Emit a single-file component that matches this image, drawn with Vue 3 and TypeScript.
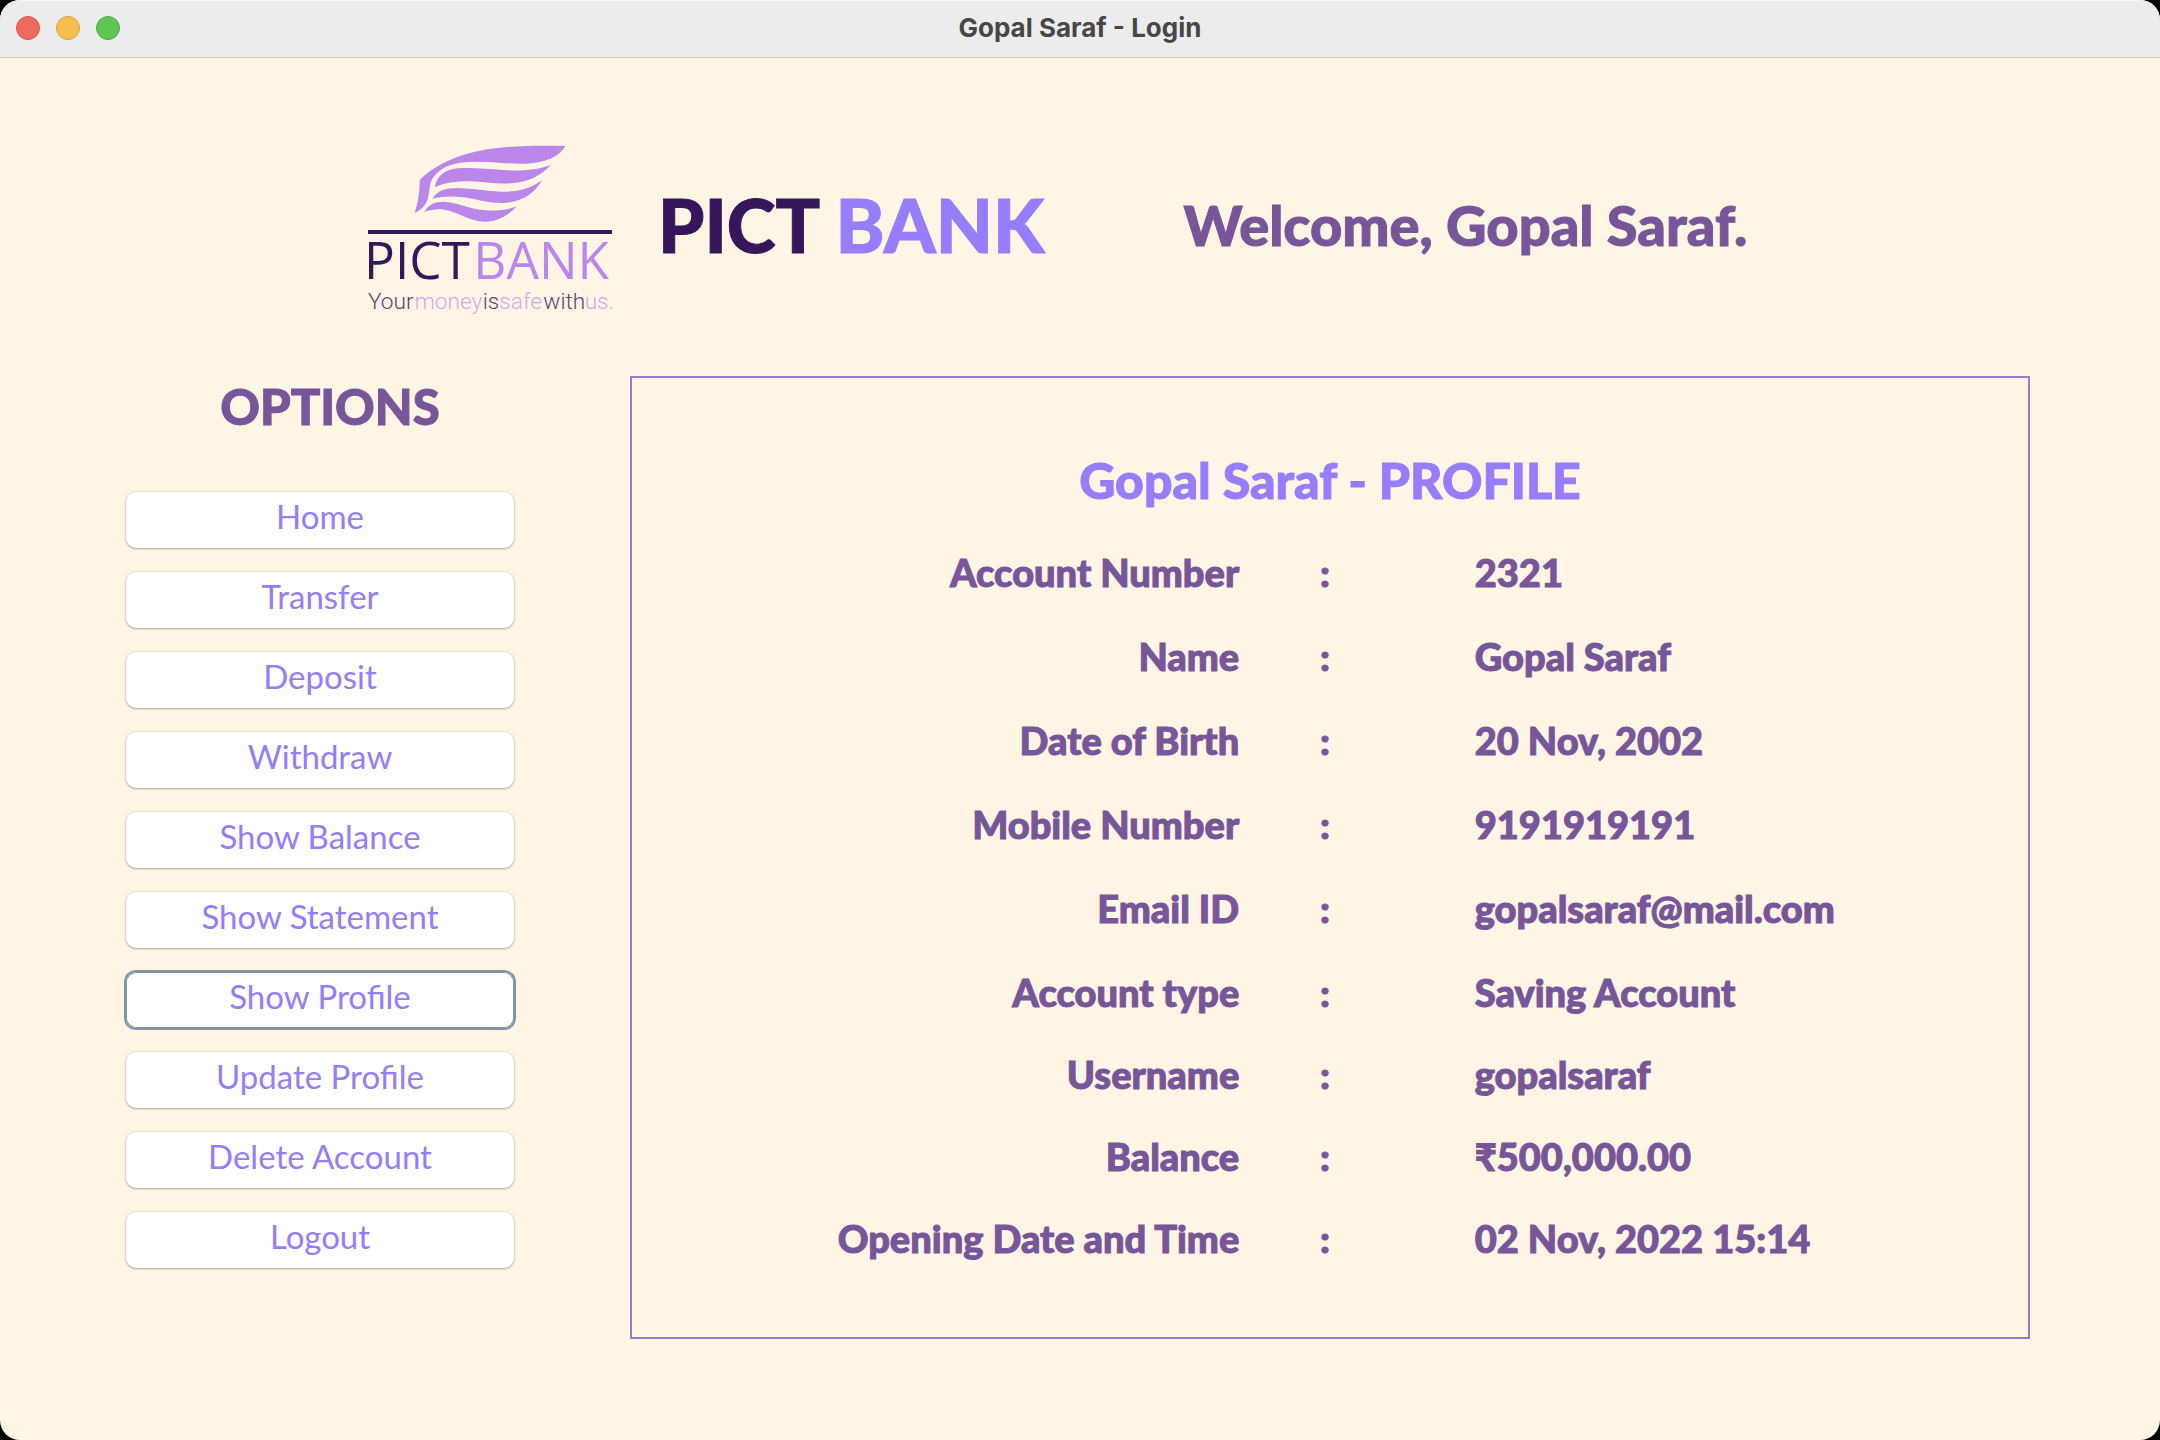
<script setup lang="ts">
import { ref } from 'vue'

interface ProfileRow {
  label: string
  value: string
}

const options: string[] = [
  'Home',
  'Transfer',
  'Deposit',
  'Withdraw',
  'Show Balance',
  'Show Statement',
  'Show Profile',
  'Update Profile',
  'Delete Account',
  'Logout',
]

const active = ref('Show Profile')

const profile: ProfileRow[] = [
  { label: 'Account Number', value: '2321' },
  { label: 'Name', value: 'Gopal Saraf' },
  { label: 'Date of Birth', value: '20 Nov, 2002' },
  { label: 'Mobile Number', value: '9191919191' },
  { label: 'Email ID', value: 'gopalsaraf@mail.com' },
  { label: 'Account type', value: 'Saving Account' },
  { label: 'Username', value: 'gopalsaraf' },
  { label: 'Balance', value: '₹500,000.00' },
  { label: 'Opening Date and Time', value: '02 Nov, 2022 15:14' },
]
</script>

<template>
  <div class="window">
    <div class="titlebar">
      <div class="lights">
        <button class="light close" type="button" aria-label="Close"></button>
        <button class="light minimise" type="button" aria-label="Minimise"></button>
        <button class="light zoom" type="button" aria-label="Zoom"></button>
      </div>
      <span class="window-title">Gopal Saraf - Login</span>
    </div>

    <header class="header">
      <svg class="logo" viewBox="39 39 765 516" role="img" aria-label="PICT Bank logo">
        <g fill="#ba86ea">
          <path d="M646 48C560 46 470 46 390 62C310 78 245 112 209 150C209 185 205 215 194 249C215 240 230 222 234 204C239 182 238 165 246 148C262 122 290 104 330 98C400 90 460 103 530 101C585 96 625 85 646 48Z" />
          <path d="M604 104C560 120 510 124 460 120C410 117 370 112 325 115C285 118 262 136 254 172C290 156 325 153 360 154C400 156 440 163 485 160C540 155 575 134 604 104Z" />
          <path d="M577 150C540 178 500 186 455 185C410 184 370 175 325 174C285 174 262 182 247 206C280 198 310 198 340 202C385 209 420 221 465 219C520 214 555 188 577 150Z" />
          <path d="M500 229C470 241 435 244 400 240C360 236 325 219 285 215C255 214 238 222 222 246C250 236 275 236 300 243C335 253 360 274 405 275C445 275 475 256 500 229Z" />
        </g>
        <rect x="54" y="300" width="732" height="12" fill="#35165a" />
        <g class="logo-name">
          <text x="42" y="448" fill="#35165a">PICT</text>
          <text x="370" y="448" fill="#ba86ea">BANK</text>
        </g>
        <g class="logo-tagline">
          <text x="54" y="537" fill="#5d4479">Your</text>
          <text x="194" y="537" fill="#d0aaec">money</text>
          <text x="398" y="537" fill="#5d4479">is</text>
          <text x="448" y="537" fill="#d0aaec">safe</text>
          <text x="580" y="537" fill="#5d4479">with</text>
          <text x="704" y="537" fill="#d0aaec">us.</text>
        </g>
      </svg>
      <h1 class="brand">PICT <span class="brand-accent">BANK</span></h1>
      <p class="welcome">Welcome, Gopal Saraf.</p>
    </header>

    <main class="content">
      <nav class="sidebar" aria-labelledby="options-title">
        <h2 id="options-title" class="options-title">OPTIONS</h2>
        <div class="options">
          <button
            v-for="option in options"
            :key="option"
            type="button"
            class="option"
            :class="{ active: option === active }"
            @click="active = option"
          >
            {{ option }}
          </button>
        </div>
      </nav>

      <section class="panel">
        <h2 class="panel-title">Gopal Saraf - PROFILE</h2>
        <table class="profile">
          <tbody>
            <tr v-for="row in profile" :key="row.label">
              <th scope="row">{{ row.label }}</th>
              <td class="colon">:</td>
              <td class="value">{{ row.value }}</td>
            </tr>
          </tbody>
        </table>
      </section>
    </main>
  </div>
</template>

<style>
body {
  margin: 0;
  background: #000;
}
</style>

<style scoped>
.window {
  box-sizing: border-box;
  min-height: 100vh;
  overflow: hidden;
  border-radius: 20px;
  background: #fff5e4;
  color: #775599;
  font-family: Lato, 'Noto Sans', sans-serif;
}

.titlebar {
  box-sizing: border-box;
  display: grid;
  grid-template-columns: 1fr auto 1fr;
  align-items: center;
  height: 58px;
  padding: 0 16px 2px;
  border-top: 1px solid #f8f8f8;
  border-bottom: 1px solid #d6cab8;
  background: #ececec;
}

.lights {
  display: flex;
  gap: 16px;
}

.light {
  width: 24px;
  height: 24px;
  padding: 0;
  border: 1px solid;
  border-radius: 50%;
}

.close {
  border-color: #d9544a;
  background: #ec6a5e;
}

.minimise {
  border-color: #d9a03c;
  background: #f4bf50;
}

.zoom {
  border-color: #4fab3f;
  background: #61c554;
}

.window-title {
  color: #464646;
  font: 700 26px/32px Inter, sans-serif;
}

.header {
  display: flex;
  align-items: center;
  padding: 85px 130px 61px 363px;
}

.logo {
  flex: none;
  width: 255px;
  height: 172px;
}

.logo-name {
  font: 400 154px 'Open Sans', sans-serif;
}

.logo-tagline {
  font: 300 68px Roboto, sans-serif;
}

.brand,
.welcome,
.options-title,
.panel-title,
.profile {
  font-weight: 900;
  -webkit-text-stroke: 1px currentColor;
}

.brand {
  margin: 0 0 0 40px;
  padding-bottom: 8px;
  color: #35165a;
  font-size: 74px;
  line-height: 88px;
  white-space: nowrap;
}

.brand-accent {
  color: #957dfc;
}

.welcome {
  margin: 0 0 0 139px;
  padding-bottom: 8px;
  font-size: 56px;
  line-height: 64px;
  white-space: nowrap;
}

.content {
  display: flex;
  align-items: flex-start;
  gap: 116px;
  padding: 0 130px 80px 126px;
}

.sidebar {
  flex: none;
  width: 388px;
}

.options-title {
  margin: 0 0 56px;
  padding-left: 20px;
  font-size: 49px;
  line-height: 60px;
  text-align: center;
}

.options {
  display: flex;
  flex-direction: column;
  gap: 24px;
}

.option {
  height: 56px;
  padding: 0 0 8px;
  border: 0;
  border-radius: 10px;
  background: #fff;
  box-shadow: 0 0 1px 1px rgba(120, 90, 50, 0.1), 0 1px 2px rgba(0, 0, 0, 0.3);
  color: #957dfc;
  font: 400 33px/40px Lato, sans-serif;
}

.option.active {
  box-shadow: inset 0 0 0 1px #8194a5, 0 0 0 2px #8194a5;
}

.panel {
  flex: 1;
  padding: 72px 0 75px;
  border: 2px solid #957dc8;
}

.panel-title {
  margin: 0 0 2px;
  color: #957dfc;
  font-size: 50px;
  line-height: 60px;
  text-align: center;
}

.profile {
  width: 100%;
  border-collapse: collapse;
  table-layout: fixed;
  font-size: 38px;
  line-height: 48px;
}

.profile tr {
  height: 84px;
}

.profile tr:nth-child(n + 7) {
  height: 82px;
}

.profile th,
.profile td {
  padding: 0;
  vertical-align: bottom;
}

.profile th {
  width: 43.5%;
  padding-right: 2px;
  font-weight: 900;
  text-align: right;
}

.profile .colon {
  width: 12%;
  text-align: center;
}

.profile .value {
  padding-left: 66px;
}
</style>
